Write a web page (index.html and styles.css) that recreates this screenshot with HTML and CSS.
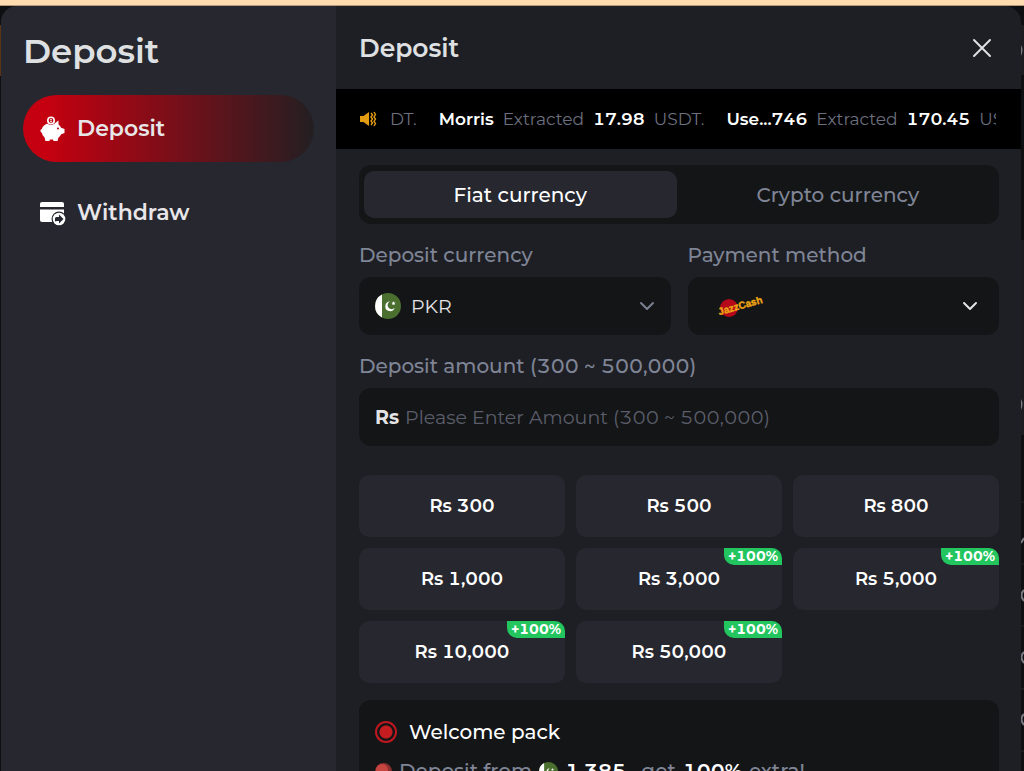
FILE: index.html
```html
<!DOCTYPE html>
<html lang="en">
<head>
    <meta charset="UTF-8">
    <meta name="viewport" content="width=device-width, initial-scale=1.0">
    <title>Deposit</title>
    <link rel="stylesheet" href="styles.css">
</head>
<body>
    <svg class="symbols" aria-hidden="true">
        <symbol id="flag-pk" viewBox="0 0 26 26">
            <circle cx="13" cy="13" r="13" fill="#4a6f2f"/>
            <path d="M7 1.5A13 13 0 0 0 7 24.500Z" fill="#fff"/>
            <path d="M15 8.500a4.800 4.800 0 1 0 4.700 6.200a4 4 0 1 1-4.700-6.200Z" fill="#fff"/>
            <path d="M18.500 8.300l.6 1.300 1.400.1-1 1 .3 1.400-1.300-.7-1.200.7.200-1.400-1-1 1.400-.1Z" fill="#fff"/>
        </symbol>
        <symbol id="chevron" viewBox="0 0 16 10">
            <path d="M2 2l6 6 6-6" fill="none" stroke="currentColor" stroke-width="2" stroke-linecap="round" stroke-linejoin="round"/>
        </symbol>
    </svg>

    <div class="top-bar"></div>

    <div class="page">
        <div class="edge-left"></div>

        <div class="modal" role="dialog" aria-label="Deposit">
            <aside class="sidebar">
                <h1>Deposit</h1>
                <nav class="menu">
                    <button type="button" class="menu-item active">
                        <svg width="26" height="26" viewBox="0 0 26 26" aria-hidden="true">
                            <path d="M18.500 4.500v4c1.200.9 2 1.900 2.600 3.200l3.400 1.300v4l-3.300 1.300c-.8 1.500-1.800 2.700-3 3.600l-.6 3h-4l-.6-1.500h-3L9.400 25h-4l-.8-3.600C3 20 2.200 18.500 1.900 17L.5 15.500v-1.800l1.400-.7C2.700 9.500 6 7.500 10 7.500h4.500Z" fill="#fff"/>
                            <circle cx="11" cy="4.500" r="4.500" fill="#b8000f"/>
                            <circle cx="11" cy="4.500" r="3.200" fill="none" stroke="#fff" stroke-width="1.600"/>
                            <path d="M11.800 3.500c-1.500-.8-2 .4-.8 1s.6 1.900-.9 1.100" fill="none" stroke="#fff"/>
                            <circle cx="18" cy="12.500" r="1" fill="#b8000f"/>
                        </svg>
                        Deposit
                    </button>
                    <button type="button" class="menu-item">
                        <svg width="26" height="26" viewBox="0 0 26 26" aria-hidden="true">
                            <path d="M2 2h20a2 2 0 0 1 2 2v3H0V4a2 2 0 0 1 2-2Z" fill="#fff"/>
                            <path d="M0 9.500h24V22H2a2 2 0 0 1-2-2Z" fill="#fff"/>
                            <circle cx="19" cy="19" r="7.500" fill="#26272f"/>
                            <circle cx="19" cy="19" r="6.300" fill="#fff"/>
                            <path d="M15 21.500v-3q0-1.500 1.500-1.500H19v-2.500l4.500 4.500-4.500 4.500V21h-2q-1.500 0-2 .5Z" fill="#26272f"/>
                        </svg>
                        Withdraw
                    </button>
                </nav>
            </aside>

            <main class="content">
                <header class="content-header">
                    <h2>Deposit</h2>
                    <button type="button" class="close" aria-label="Close">
                        <svg width="20" height="20" viewBox="0 0 20 20" aria-hidden="true">
                            <path d="M2 2l16 16M18 2L2 18" fill="none" stroke="currentColor" stroke-width="2" stroke-linecap="round"/>
                        </svg>
                    </button>
                </header>

                <div class="ticker">
                    <svg width="18" height="16" viewBox="0 0 18 16" aria-hidden="true">
                        <path d="M1 5h3.500L10 1v14l-5.500-4H1Z" fill="#e39b12"/>
                        <path d="M12 2l1.500 2L12 6l1.500 2-1.500 2 1.500 2-1.500 2M15 1l1.500 2.500L15 6l1.500 2L15 10.500l1.500 2L15 15" fill="none" stroke="#e39b12" stroke-width="1.400"/>
                    </svg>
                    <div class="ticker-text">
                        <p>DT.</p>
                        <p><b>Morris</b> <span>Extracted</span> <b>17.98</b> <span>USDT.</span></p>
                        <p><b>Use...746</b> <span>Extracted</span> <b>170.45</b> <span>USDT.</span></p>
                    </div>
                </div>

                <form class="deposit-form">
                    <div class="tabs">
                        <button type="button" class="tab active">Fiat currency</button>
                        <button type="button" class="tab">Crypto currency</button>
                    </div>

                    <div class="row">
                        <div class="group">
                            <label for="currency">Deposit currency</label>
                            <div class="field">
                                <svg class="flag" aria-hidden="true"><use href="#flag-pk"/></svg>
                                <select id="currency">
                                    <option>PKR</option>
                                </select>
                                <svg class="chevron" aria-hidden="true"><use href="#chevron"/></svg>
                            </div>
                        </div>
                        <div class="group">
                            <label for="method">Payment method</label>
                            <div class="field method">
                                <svg width="76" height="40" viewBox="0 0 76 40" aria-hidden="true">
                                    <circle cx="25" cy="22" r="9" fill="#b5091b"/>
                                    <g transform="rotate(-16 16 28)" class="logo-text">
                                        <text x="15" y="29">Jazz</text>
                                        <text x="36" y="29">Cash</text>
                                    </g>
                                </svg>
                                <select id="method">
                                    <option value="jazzcash" aria-label="JazzCash"></option>
                                </select>
                                <svg class="chevron" aria-hidden="true"><use href="#chevron"/></svg>
                            </div>
                        </div>
                    </div>

                    <div class="group">
                        <label for="amount">Deposit amount (300 ~ 500,000)</label>
                        <div class="field amount">
                            <b>Rs</b>
                            <input type="text" id="amount" placeholder="Please Enter Amount (300 ~ 500,000)">
                        </div>
                    </div>

                    <div class="amounts">
                        <button type="button">Rs 300</button>
                        <button type="button">Rs 500</button>
                        <button type="button">Rs 800</button>
                        <button type="button">Rs 1,000</button>
                        <button type="button">Rs 3,000<span class="bonus">+100%</span></button>
                        <button type="button">Rs 5,000<span class="bonus">+100%</span></button>
                        <button type="button">Rs 10,000<span class="bonus">+100%</span></button>
                        <button type="button">Rs 50,000<span class="bonus">+100%</span></button>
                    </div>

                    <div class="pack">
                        <label class="pack-title">
                            <input type="radio" name="pack" checked>
                            Welcome pack
                        </label>
                        <p class="pack-info">
                            <svg width="17" height="17" viewBox="0 0 17 17" aria-hidden="true">
                                <circle cx="8.500" cy="8.500" r="8.500" fill="#8e2f2f"/>
                                <circle cx="7" cy="7" r="6" fill="#c64540"/>
                            </svg>
                            <span>Deposit from</span>
                            <svg width="19" height="19" aria-hidden="true"><use href="#flag-pk"/></svg>
                            <span><b>1,385</b> , get</span>
                            <b>100%</b>
                            <span>extra!</span>
                        </p>
                    </div>
                </form>
            </main>
        </div>

        <!-- sliver of the page behind the dialog -->
        <svg class="edge-right" viewBox="0 0 3 765" preserveAspectRatio="xMinYMin slice" aria-hidden="true">
            <path d="M0 19h3v50H0ZM0 234h3v195H0Z" fill="#1c1d21"/>
            <path d="M0 496h3M0 558h3M0 620h3M0 683h3M0 745h3" stroke="#24262b"/>
            <path d="M0 39q3 5 0 11ZM0 393q3 5 0 11Z" fill="#777a82"/>
            <path d="M0 537l3-5M3 584q-5 5 0 11M3 646q-5 5 0 11M3 708q-5 5 0 11" fill="none" stroke="#777a82" stroke-width="2"/>
        </svg>
    </div>
</body>
</html>
```

FILE: styles.css
```css
/* Reset some default styles */
* {
    margin: 0;
    padding: 0;
    box-sizing: border-box;
    font-family: Montserrat, Inter, "Liberation Sans", sans-serif;
    font-variant-numeric: tabular-nums;
}

body {
    display: flex;
    flex-direction: column;
    height: 100vh;
    overflow: hidden;
    background: #0e0f11;
    color: #fff;
    font-size: 20px;
}

button,
select,
input {
    border: none;
    background: none;
    color: inherit;
    font-size: 20px;
}

button {
    cursor: pointer;
}

svg {
    flex-shrink: 0;
}

.symbols {
    display: none;
}

.top-bar {
    height: 6px;
    flex-shrink: 0;
    background: #ffdcb0;
    border-bottom: 1px solid #b39a7b;
}

.page {
    flex: 1;
    min-height: 0;
    display: grid;
    grid-template-columns: 1px minmax(0, 1fr) 3px;
}

.edge-left {
    background: linear-gradient(#0e0f11 19px, #5a3416 19px, #5a3416 70px, #0e0f11 70px);
}

.edge-right {
    width: 3px;
    height: 100%;
}

.modal {
    display: grid;
    grid-template-columns: 335px minmax(0, 1fr);
    overflow: hidden;
    border-radius: 16px 16px 0 0;
    background: #1e1f24;
}

/* Sidebar */
.sidebar {
    padding: 22px;
    background: #26272f;
}

.sidebar h1 {
    color: #dfe0e2;
    font-size: 34px;
    font-weight: 600;
    line-height: 46px;
}

.menu {
    display: flex;
    flex-direction: column;
    gap: 17px;
    margin-top: 21px;
}

.menu-item {
    display: flex;
    align-items: center;
    gap: 11px;
    height: 67px;
    padding: 0 17px;
    border-radius: 34px;
    color: #e8e6e8;
    font-size: 22px;
    font-weight: 600;
}

.menu-item.active {
    background: linear-gradient(to right, #c50010 8%, #231f22);
}

/* Header */
.content {
    min-width: 0;
}

.content-header {
    display: flex;
    justify-content: space-between;
    align-items: center;
    height: 83px;
    padding: 0 29px 0 23px;
    color: #dfe0e2;
}

.content-header h2 {
    font-size: 25px;
    font-weight: 600;
}

.close {
    display: flex;
}

/* Ticker */
.ticker {
    display: flex;
    align-items: center;
    gap: 13px;
    height: 60px;
    padding: 0 25px 0 23px;
    background: #000;
    color: #6c6f7e;
    font-size: 17px;
}

.ticker-text {
    flex: 1;
    display: flex;
    gap: 22px;
    overflow: hidden;
    white-space: nowrap;
}

.ticker-text p {
    display: flex;
    gap: 9px;
}

.ticker-text b {
    color: #fff;
    font-weight: 600;
}

/* Form */
.deposit-form {
    padding: 16px 22px 16px 23px;
}

.tabs {
    display: grid;
    grid-template-columns: 1fr 1fr;
    gap: 5px;
    height: 59px;
    padding: 6px 5px;
    border-radius: 12px;
    background: #141517;
}

.tab {
    border-radius: 10px;
    color: #7f8596;
    font-weight: 500;
}

.tab.active {
    background: #26272f;
    color: #fff;
}

.row {
    display: grid;
    grid-template-columns: 1fr 1fr;
    gap: 17px;
}

.group label {
    display: block;
    padding: 18px 0 9px;
    color: #7f8596;
    font-weight: 500;
    line-height: 26px;
}

.field {
    display: flex;
    align-items: center;
    gap: 10px;
    height: 58px;
    padding: 0 16px;
    border-radius: 12px;
    background: #141517;
}

.field select,
.field input {
    flex: 1;
    min-width: 0;
    height: 100%;
    appearance: none;
    color: #e4e4e6;
    font-size: 19px;
    outline: none;
}

.field input::placeholder {
    color: #5b5e6a;
}

.flag {
    width: 26px;
    height: 26px;
}

.chevron {
    width: 16px;
    height: 10px;
    color: #7b8090;
}

.method {
    padding-right: 21px;
}

.method .chevron {
    color: #e4e4e6;
}

.logo-text text {
    fill: #eda515;
    stroke: #eda515;
    stroke-width: 0.4;
    font-family: "Liberation Sans", Arial, sans-serif;
    font-size: 10px;
    font-weight: 700;
}

.amount {
    gap: 6px;
}

.amount b {
    color: #e4e4e6;
    font-size: 19px;
    font-weight: 700;
}

/* Quick amounts */
.amounts {
    display: grid;
    grid-template-columns: repeat(3, 1fr);
    gap: 11px;
    margin-top: 29px;
}

.amounts button {
    position: relative;
    height: 62px;
    border-radius: 10px;
    background: #26272f;
    font-size: 18px;
    font-weight: 600;
}

.bonus {
    position: absolute;
    top: 0;
    right: 0;
    padding: 0 4px;
    border-radius: 0 10px 0 10px;
    background: #22c55e;
    font-size: 14px;
    font-weight: 700;
    line-height: 17px;
}

/* Welcome pack */
.pack {
    margin-top: 17px;
    padding: 16px;
    border-radius: 12px;
    background: #141517;
}

.pack-title {
    display: flex;
    align-items: center;
    gap: 12px;
    font-weight: 500;
    line-height: 32px;
}

.pack-title input {
    width: 22px;
    height: 22px;
    appearance: none;
    border: 2px solid #bd1820;
    border-radius: 50%;
    background: radial-gradient(circle, #c41c1f 6px, transparent 7px);
}

.pack-info {
    display: flex;
    align-items: center;
    gap: 7px;
    margin-top: 9px;
    color: #7f8596;
    font-weight: 500;
    line-height: 28px;
    white-space: nowrap;
}

.pack-info b {
    color: #fff;
    font-weight: 600;
}
```
